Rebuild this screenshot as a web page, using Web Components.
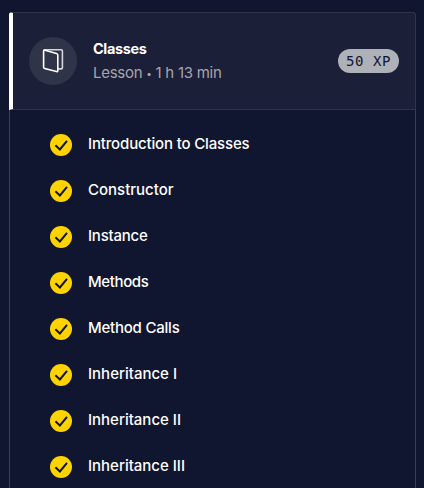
<!DOCTYPE html>
<html lang="en">
<head>
<meta charset="utf-8">
<title>Classes</title>
<style>
html, body { margin: 0; height: 100%; background: #10162f; overflow: hidden; }
body { font: 500 15px/24px Inter, "Liberation Sans", sans-serif; color: #fff; }
.dot { font-size: 10px; line-height: 1; vertical-align: 1px; }
</style>
</head>
<body>
<lesson-card>
  <lesson-header slot="header">
    <book-icon slot="icon"></book-icon>
    <fit-text slot="title" width="53.5">Classes</fit-text>
    <fit-text slot="meta" width="128.5">Lesson <span class="dot">•</span> 1 h 13 min</fit-text>
    <xp-badge slot="badge">50 XP</xp-badge>
  </lesson-header>
  <lesson-item><fit-text width="161.5">Introduction to Classes</fit-text></lesson-item>
  <lesson-item><fit-text width="85.5">Constructor</fit-text></lesson-item>
  <lesson-item><fit-text width="59.5">Instance</fit-text></lesson-item>
  <lesson-item><fit-text width="60.5">Methods</fit-text></lesson-item>
  <lesson-item><fit-text width="91.5">Method Calls</fit-text></lesson-item>
  <lesson-item><fit-text width="89">Inheritance I</fit-text></lesson-item>
  <lesson-item><fit-text width="93">Inheritance II</fit-text></lesson-item>
  <lesson-item><fit-text width="97">Inheritance III</fit-text></lesson-item>
</lesson-card>
<script>
function define(name, html, Base = HTMLElement) {
  const template = document.createElement('template');
  template.innerHTML = html;
  customElements.define(name, class extends Base {
    constructor() {
      super();
      this.attachShadow({ mode: 'open' }).append(template.content.cloneNode(true));
    }
  });
}

define('lesson-card', `
<style>
  :host { display: block; box-sizing: border-box; height: 100vh; padding: 12px 8px 0 9px; }
  section { box-sizing: border-box; height: 100%; border: solid #3a3f54; border-width: 0 1px; border-radius: 4px 4px 0 0; }
  .header { display: block; margin: 0 -1px; }
  .items { display: flex; flex-direction: column; gap: 22px; padding: 22px 40px 0; }
</style>
<section><div class="header"><slot name="header"></slot></div><div class="items"><slot></slot></div></section>`);

define('lesson-header', `
<style>
  :host { display: flex; align-items: center; box-sizing: border-box; height: 98px;
    padding: 0 16px; border: 1px solid #303449; border-left: 4px solid #fff;
    border-radius: 3px 4px 0 0; background: #1b1f38; }
  .copy { flex: 1; display: flex; flex-direction: column; margin-left: 16px; }
  .title { font-weight: 700; font-size: 14.5px; }
  .meta { color: #a4a6b0; font-weight: 400; }
</style>
<slot name="icon"></slot>
<div class="copy"><div class="title"><slot name="title"></slot></div><div class="meta"><slot name="meta"></slot></div></div>
<slot name="badge"></slot>`);

define('book-icon', `
<style>
  :host { display: grid; place-items: center; width: 48px; height: 48px; border-radius: 50%; background: #303449; }
  svg { display: block; }
</style>
<svg width="24" height="28" viewBox="0 0 24 28" fill="none" stroke-width="1.6" stroke-linejoin="round" stroke-linecap="round">
  <path d="M3.2 2.7H20.2a1.2 1.2 0 0 1 1.2 1.2V20.7a1.2 1.2 0 0 1-1.2 1.2H17.5" stroke="#d5d6db"/>
  <path d="M2.6 4.3Q2.6 2.9 4 3.3L15.5 6.4Q16.8 6.8 16.8 8.1V23.6Q16.8 25 15.5 24.6L3.7 21.4Q2.6 21.1 2.6 19.9Z" stroke="#fff"/>
</svg>`);

define('xp-badge', `
<style>
  :host { display: flex; align-items: center; justify-content: center; box-sizing: border-box; width: 61px; height: 24px;
    border-radius: 12px; background: #afb1b9; color: #10162f; white-space: pre;
    font: 400 14px/24px "DejaVu Sans Mono", "Liberation Mono", monospace; letter-spacing: 0.57px; }
</style>
<slot></slot>`);

define('lesson-item', `
<style>
  :host { display: flex; align-items: flex-start; height: 24px; gap: 16px; }
  svg { display: block; flex: none; margin-top: 2px; }
</style>
<svg width="22" height="22" viewBox="0 0 22 22">
  <circle cx="11" cy="11" r="11" fill="#ffd300"/>
  <path d="M5.4 11.2L9.9 15.5L17 6.8" fill="none" stroke="#10162f" stroke-width="2"/>
</svg>
<slot></slot>`);

// Tracks its text out or in so that it spans the requested width.
class Fitted extends HTMLElement {
  connectedCallback() {
    const natural = this.getBoundingClientRect().width;
    const target = Number(this.getAttribute('width'));
    this.style.letterSpacing = (target - natural) / this.textContent.length + 'px';
  }
}
define('fit-text', `
<style>:host { display: inline-block; white-space: nowrap; }</style><slot></slot>`, Fitted);
</script>
</body>
</html>
